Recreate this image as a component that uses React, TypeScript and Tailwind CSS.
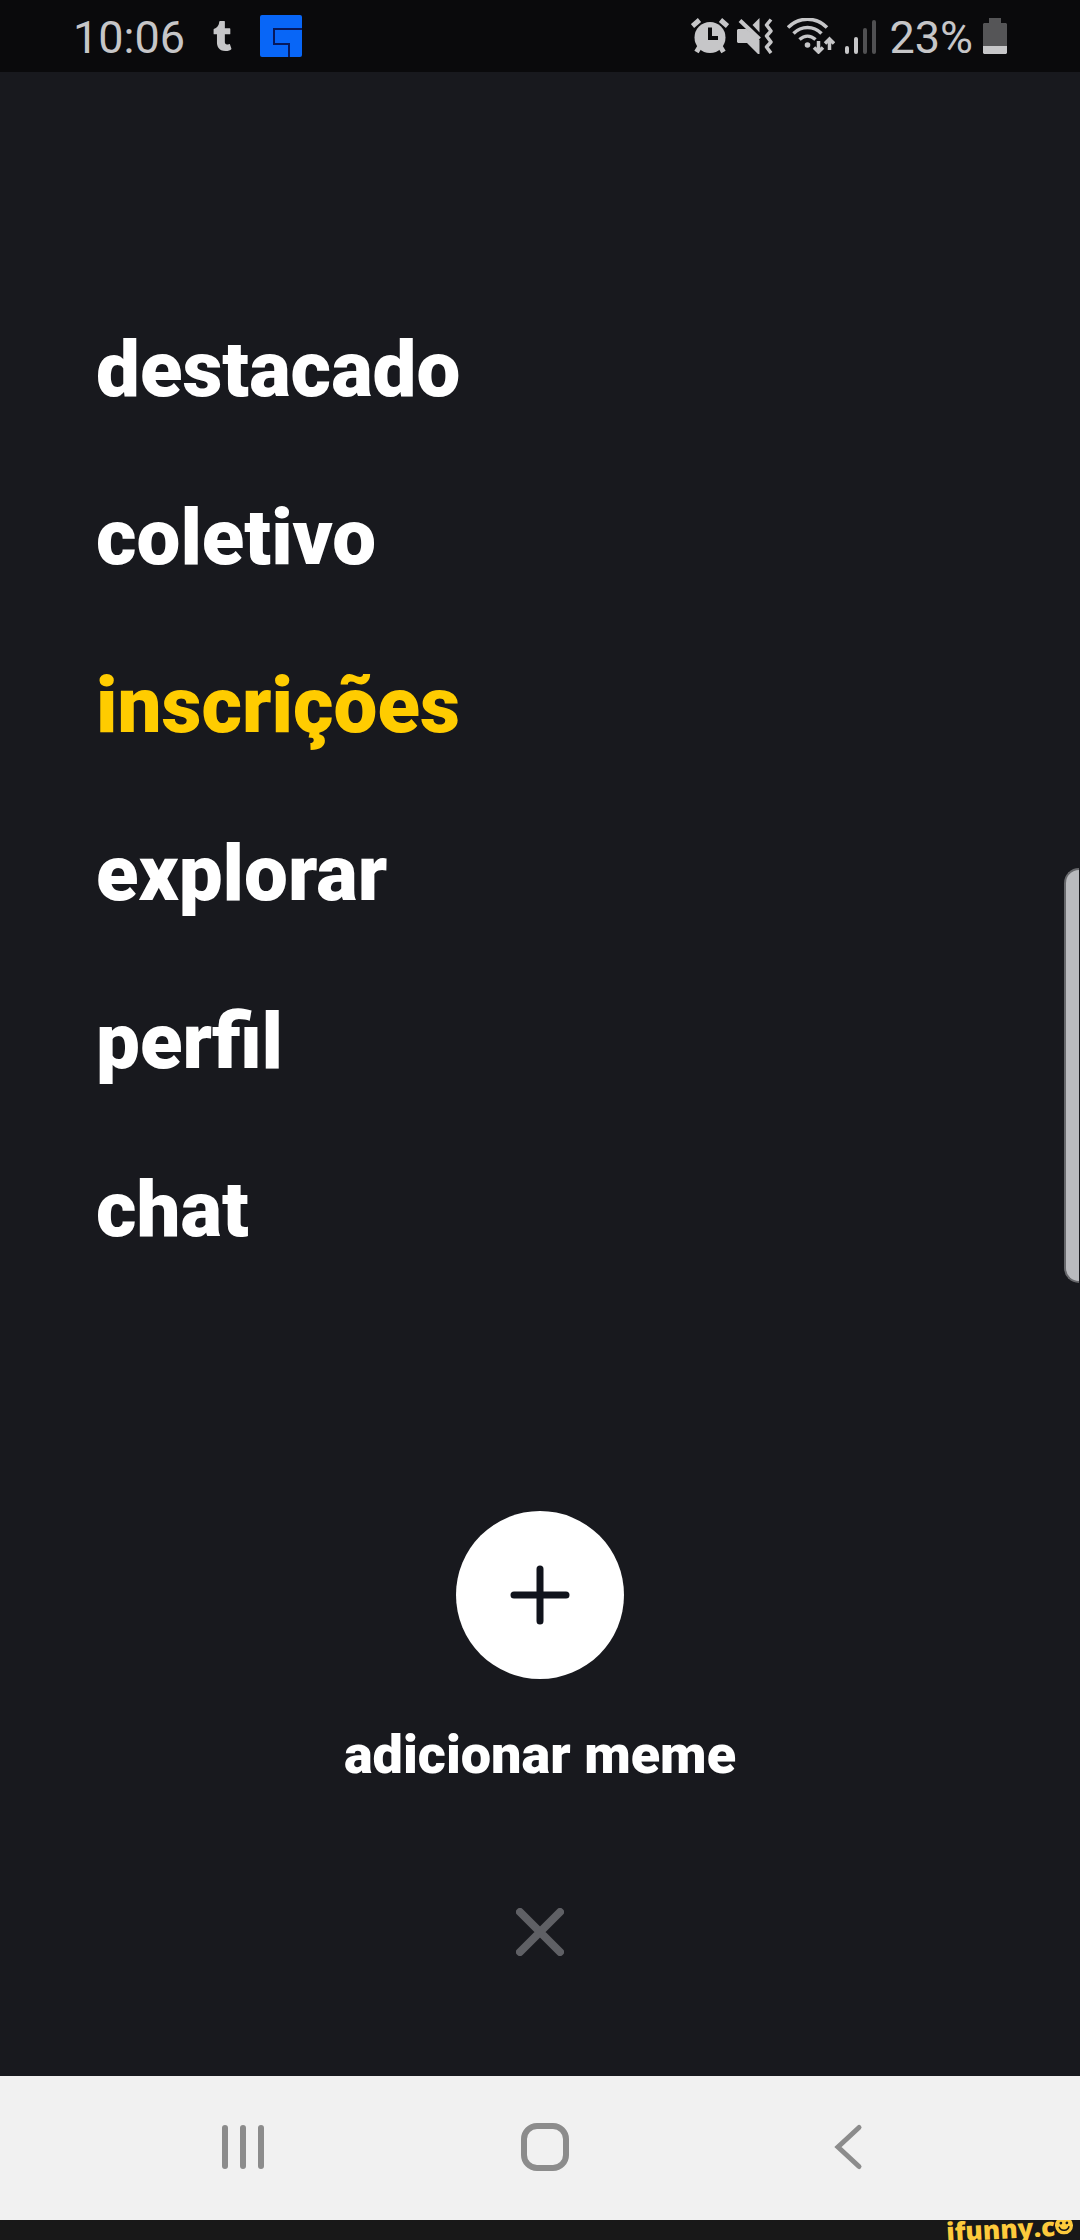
import React, { useState } from 'react';
import { FaTumblr } from 'react-icons/fa';

const menuItems = [
  { id: 'featured', label: 'destacado' },
  { id: 'collective', label: 'coletivo' },
  { id: 'subscriptions', label: 'inscrições' },
  { id: 'explore', label: 'explorar' },
  { id: 'profile', label: 'perfil' },
  { id: 'chat', label: 'chat' },
];

const GameIcon = () => (
  <svg className="w-[42px] h-[42px]" viewBox="0 0 42 42">
    <rect width="42" height="42" rx="2" fill="#0866f7" />
    <path d="M42 14H14v15h15v13" fill="none" stroke="#07195c" strokeWidth="2" />
  </svg>
);

const AlarmIcon = () => (
  <svg className="w-[38px] h-9" viewBox="0 0 38 36">
    <g stroke="#c6c6c8" strokeWidth="5">
      <path d="M1.500 8L8.500 2M29.500 2l7 6" />
      <path d="M8.500 29l-3 5M29.500 29l3 5" />
    </g>
    <circle cx="19" cy="19.500" r="15.500" fill="#c6c6c8" />
    <path d="M19 9.500v10.500h8" fill="none" stroke="#0a0a0c" strokeWidth="4" />
  </svg>
);

const MuteIcon = () => (
  <svg className="w-9 h-9" viewBox="0 0 36 36">
    <g fill="#c6c6c8">
      <path d="M22.500 0v14.500L15.500 7z" />
      <path d="M1 11h8.500l13 11v14h-1.500L10 25H1l-1-1V12z" />
    </g>
    <path d="M3 2.500L22.500 21" stroke="#c6c6c8" strokeWidth="4" />
    <path
      d="M34 1.500L29.500 7l4.500 6L29.500 18l4.500 6L29.500 29l4.500 6"
      fill="none"
      stroke="#c6c6c8"
      strokeWidth="3.500"
      strokeLinejoin="round"
    />
  </svg>
);

const WifiIcon = () => (
  <svg className="w-12 h-9" viewBox="0 0 48 36">
    <g fill="none" stroke="#c6c6c8" strokeWidth="3.500">
      <path d="M1 9.500C12-1.500 29-1.500 40 9.500" />
      <path d="M6.500 15.500c8-8 20-8 28 0" />
      <path d="M12.500 21.500c5-4.500 11-4.500 16 0" />
      <path d="M31.500 23v11M27 29.500l4.500 4.500 4.500-4.500" />
      <path d="M42.500 32V21M38 25.500l4.500-4.500 4.500 4.500" />
    </g>
    <circle cx="20.500" cy="27" r="2.800" fill="#c6c6c8" />
  </svg>
);

const SignalIcon = () => (
  <svg className="w-8 h-9" viewBox="0 0 32 36">
    <g fill="#c6c6c8">
      <rect x="0" y="28" width="4" height="8" rx="2" />
      <rect x="9" y="19" width="4" height="17" rx="2" />
    </g>
    <g fill="#505052">
      <rect x="18" y="10" width="4" height="26" rx="2" />
      <rect x="27" y="2" width="4" height="34" rx="2" />
    </g>
  </svg>
);

const BatteryIcon = () => (
  <svg className="w-6 h-9" viewBox="0 0 24 36">
    <path d="M6 0h12v5h5l1 1v22H0V6l1-1h5z" fill="#555557" />
    <path d="M0 28h24v7l-1 1H1l-1-1z" fill="#c6c6c8" />
  </svg>
);

const StatusBar = () => (
  <header className="h-[72px] shrink-0 bg-[#0a0a0c] flex items-center justify-between px-[73px] text-[45px] leading-[60px] text-[#c6c6c8]">
    <div className="flex items-center">
      <span className="pt-1">10:06</span>
      <FaTumblr className="mx-7 w-[19px] h-[30px]" />
      <GameIcon />
    </div>
    <div className="flex items-center">
      <AlarmIcon />
      <span className="ml-2 mr-[14px]">
        <MuteIcon />
      </span>
      <WifiIcon />
      <span className="ml-[10px] mr-3">
        <SignalIcon />
      </span>
      <span className="pt-1 mr-[10px]">23%</span>
      <BatteryIcon />
    </div>
  </header>
);

const SystemNav = () => (
  <nav className="h-36 shrink-0 bg-[#f1f1f1] flex items-center justify-center gap-[254px] pl-[10px] pb-[2px] text-[#8c8c8c]">
    <button aria-label="Recentes">
      <svg className="w-12 h-12" viewBox="0 0 48 48" stroke="currentColor" strokeWidth="6" strokeLinecap="round">
        <path d="M6 5v38M24 5v38M42 5v38" />
      </svg>
    </button>
    <button aria-label="Início">
      <svg className="w-12 h-12" viewBox="0 0 48 48" fill="none" stroke="currentColor" strokeWidth="6">
        <rect x="3" y="3" width="42" height="42" rx="13" />
      </svg>
    </button>
    <button aria-label="Voltar">
      <svg className="w-12 h-12" viewBox="0 0 48 48" fill="none" stroke="currentColor" strokeWidth="5" strokeLinecap="round">
        <path d="M36 4.500L15 24l21 19.500" />
      </svg>
    </button>
  </nav>
);

const Watermark = () => (
  <footer className="h-5 shrink-0 bg-[#181818] overflow-hidden flex justify-end pr-[7px]">
    <div className="flex items-center -rotate-3 origin-right h-[10px] text-[#fdca3c]">
      <span className="font-['Open_Sans'] font-extrabold text-[26px] leading-[26px]">ifunny.c</span>
      <svg className="w-[18px] h-[18px]" viewBox="0 0 18 18">
        <circle cx="9" cy="9" r="9" fill="currentColor" />
        <circle cx="6" cy="6.500" r="1.400" fill="#181818" />
        <circle cx="12" cy="6.500" r="1.400" fill="#181818" />
        <path d="M4 10c1.500 5 8.500 5 10 0" fill="none" stroke="#181818" strokeWidth="1.500" />
      </svg>
    </div>
  </footer>
);

export default function App() {
  const [active, setActive] = useState('subscriptions');

  return (
    <div className="relative min-h-screen flex flex-col bg-[#18191e] font-[Roboto,sans-serif]">
      <StatusBar />

      <main className="flex-1 flex flex-col">
        <nav className="pt-[214px] px-24 flex flex-col items-start">
          {menuItems.map((item) => (
            <button
              key={item.id}
              onClick={() => setActive(item.id)}
              className={`text-[78px] leading-[168px] font-black cursor-pointer ${
                active === item.id ? 'text-[#ffcc00]' : 'text-white'
              }`}
            >
              {item.label}
            </button>
          ))}
        </nav>

        <div className="mt-[217px] flex flex-col items-center">
          <button id="add-meme" aria-labelledby="add-meme-label" className="w-[168px] h-[168px] rounded-full bg-white flex items-center justify-center cursor-pointer">
            <svg className="w-[60px] h-[60px]" viewBox="0 0 60 60" stroke="#10131c" strokeWidth="7" strokeLinecap="round">
              <path d="M30 4v52M4 30h52" />
            </svg>
          </button>
          <label id="add-meme-label" htmlFor="add-meme" className="mt-10 text-[54px] leading-[72px] font-black text-white">
            adicionar meme
          </label>
          <button aria-label="Fechar" className="mt-[117px] mb-[120px] cursor-pointer">
            <svg className="w-12 h-12" viewBox="0 0 48 48" stroke="#5f6065" strokeWidth="8" strokeLinecap="round">
              <path d="M4 4l40 40M44 4L4 44" />
            </svg>
          </button>
        </div>
      </main>

      {/* edge panel handle */}
      <div className="absolute right-px top-[868px] w-[15px] h-[415px] rounded-l-[15px] bg-[#b9babe] border-2 border-r-0 border-[#67686c]" />

      <SystemNav />
      <Watermark />
    </div>
  );
}
